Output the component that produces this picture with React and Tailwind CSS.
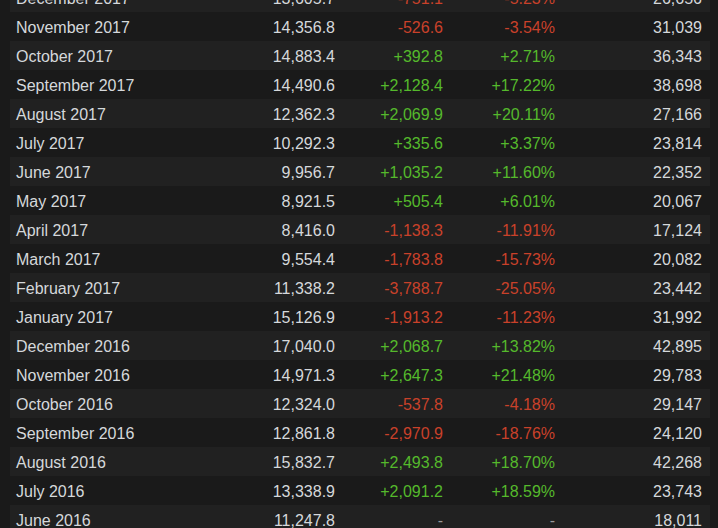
const rows = [
  ["December 2017", "13,605.7", "-751.1", "-5.23%", "26,656"],
  ["November 2017", "14,356.8", "-526.6", "-3.54%", "31,039"],
  ["October 2017", "14,883.4", "+392.8", "+2.71%", "36,343"],
  ["September 2017", "14,490.6", "+2,128.4", "+17.22%", "38,698"],
  ["August 2017", "12,362.3", "+2,069.9", "+20.11%", "27,166"],
  ["July 2017", "10,292.3", "+335.6", "+3.37%", "23,814"],
  ["June 2017", "9,956.7", "+1,035.2", "+11.60%", "22,352"],
  ["May 2017", "8,921.5", "+505.4", "+6.01%", "20,067"],
  ["April 2017", "8,416.0", "-1,138.3", "-11.91%", "17,124"],
  ["March 2017", "9,554.4", "-1,783.8", "-15.73%", "20,082"],
  ["February 2017", "11,338.2", "-3,788.7", "-25.05%", "23,442"],
  ["January 2017", "15,126.9", "-1,913.2", "-11.23%", "31,992"],
  ["December 2016", "17,040.0", "+2,068.7", "+13.82%", "42,895"],
  ["November 2016", "14,971.3", "+2,647.3", "+21.48%", "29,783"],
  ["October 2016", "12,324.0", "-537.8", "-4.18%", "29,147"],
  ["September 2016", "12,861.8", "-2,970.9", "-18.76%", "24,120"],
  ["August 2016", "15,832.7", "+2,493.8", "+18.70%", "42,268"],
  ["July 2016", "13,338.9", "+2,091.2", "+18.59%", "23,743"],
  ["June 2016", "11,247.8", "-", "-", "18,011"],
];

// colour of a gain cell: green up, red down, grey for no data
function gainColor(v) {
  if (v.startsWith("+")) return "text-[#55b92c]";
  if (v.startsWith("-") && v.length > 1) return "text-[#c9412a]";
  return "text-[#9a9a9a]";
}

export default function App() {
  return (
    <div className="h-[528px] w-[718px] overflow-hidden bg-[#1a1a1a] font-['Liberation_Sans',Arial,sans-serif] text-[16px] text-[#d5d8db]">
      <div className="ml-[10px] mt-[-17px] w-[700px]">
        {rows.map((r, i) => (
          <div
            key={r[0]}
            className={`grid h-[29px] grid-cols-[184px_135px_108px_112px_147px] items-center pl-[6px] pr-[8px] pt-[2px] ${
              i % 2 === 0 ? "bg-[#212121]" : "bg-[#1a1a1a]"
            }`}
          >
            <div className="whitespace-nowrap">{r[0]}</div>
            <div className="text-right">{r[1]}</div>
            <div className={`text-right ${gainColor(r[2])}`}>{r[2]}</div>
            <div className={`text-right ${gainColor(r[3])}`}>{r[3]}</div>
            <div className="text-right">{r[4]}</div>
          </div>
        ))}
      </div>
    </div>
  );
}
